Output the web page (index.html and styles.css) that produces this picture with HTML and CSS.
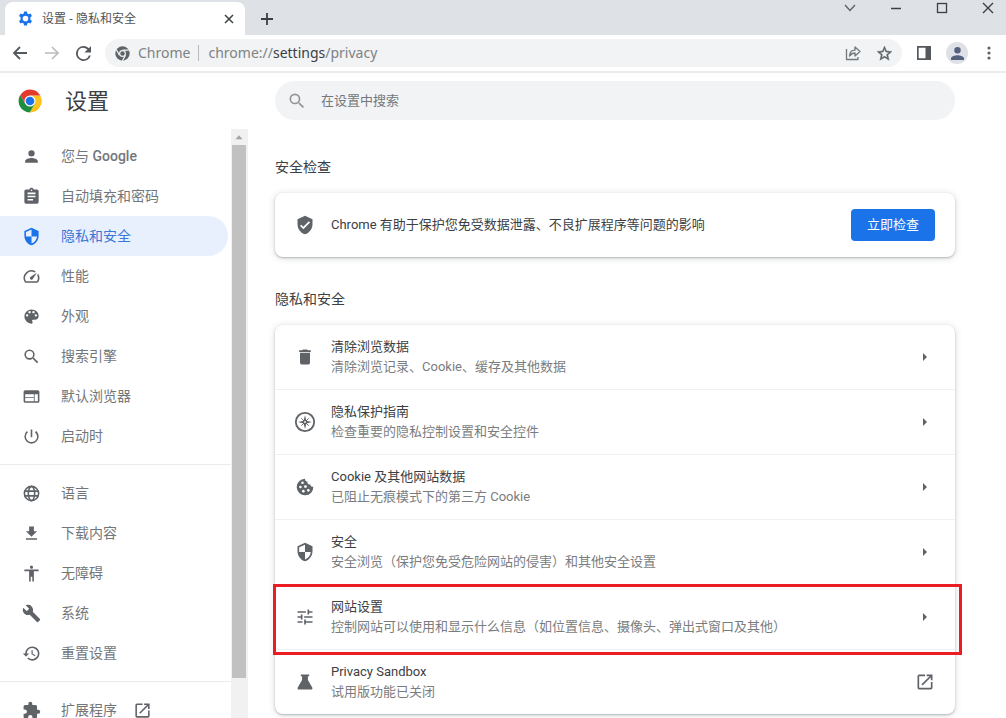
FILE: index.html
```html
<!DOCTYPE html>
<html lang="zh-CN">
<head>
<meta charset="utf-8">
<title>设置 - 隐私和安全</title>
<link rel="stylesheet" href="styles.css">
</head>
<body>
<header class="tabstrip">
  <div class="tab">
    <svg class="tab-icon" viewBox="0 0 24 24" width="17" height="17"><path fill="#1a73e8" fill-rule="evenodd" d="M10 2h4l.6 2.900 1.700 1 2.800-1 2 3.500-2.200 1.900v3.400l2.200 1.900-2 3.500-2.800-1-1.700 1L14 22h-4l-.6-2.900-1.700-1-2.800 1-2-3.500 2.200-1.900v-3.400L2.900 8.400l2-3.500 2.800 1 1.700-1zM12 8a4 4 0 1 0 0 8 4 4 0 0 0 0-8z"/></svg>
    <span class="tab-title">设置 - 隐私和安全</span>
    <button class="icon-btn" aria-label="关闭标签页"><svg viewBox="0 0 10 10" width="10" height="10"><path d="M1 1l8 8M9 1L1 9" stroke="#3c4043" stroke-width="1.500"/></svg></button>
  </div>
  <button class="icon-btn new-tab" aria-label="新标签页"><svg viewBox="0 0 12 12" width="12" height="12"><path d="M6 0v12M0 6h12" stroke="#3c4043" stroke-width="1.800"/></svg></button>
  <div class="window-controls">
    <button class="icon-btn" aria-label="搜索标签页"><svg viewBox="0 0 12 12" width="12" height="12"><path d="M1 3l5 5.500L11 3" fill="none" stroke="#5f6368" stroke-width="1.400"/></svg></button>
    <button class="icon-btn" aria-label="最小化"><svg viewBox="0 0 12 12" width="12" height="12"><path d="M1 6.500h10" stroke="#3c4043" stroke-width="1.500"/></svg></button>
    <button class="icon-btn" aria-label="最大化"><svg viewBox="0 0 12 12" width="12" height="12"><rect x="1.500" y="1.500" width="9" height="9" fill="none" stroke="#3c4043" stroke-width="1.300"/></svg></button>
    <button class="icon-btn" aria-label="关闭"><svg viewBox="0 0 12 12" width="12" height="12"><path d="M1 1l10 10M11 1L1 11" stroke="#3c4043" stroke-width="1.400"/></svg></button>
  </div>
</header>
<div class="toolbar">
  <div class="nav-buttons">
    <button class="icon-btn" aria-label="后退"><svg viewBox="0 0 16 16" width="16" height="16"><path d="M15 8H2M8 2L2 8l6 6" fill="none" stroke="#55595e" stroke-width="1.800"/></svg></button>
    <button class="icon-btn" aria-label="前进"><svg viewBox="0 0 16 16" width="16" height="16"><path d="M1 8h13M8 2l6 6-6 6" fill="none" stroke="#babcbe" stroke-width="1.700"/></svg></button>
    <button class="icon-btn" aria-label="重新加载"><svg viewBox="4 4 16 16" width="15" height="15"><path fill="#55595e" d="M17.650 6.350A7.960 7.960 0 0 0 12 4a8 8 0 1 0 7.730 10h-2.080A6 6 0 1 1 12 6c1.660 0 3.140.69 4.220 1.780L13 11h7V4l-2.350 2.350z"/></svg></button>
  </div>
  <div class="omnibox">
    <svg viewBox="0 0 24 24" width="15" height="15"><circle cx="12" cy="12" r="11.500" fill="#5f6368"/><path d="M12 6.500h10M7.200 14.700L2.200 6M16.800 14.700L11.800 23.500" stroke="#f1f3f4" stroke-width="2"/><circle cx="12" cy="12" r="5.500" fill="#f1f3f4"/><circle cx="12" cy="12" r="3.600" fill="#5f6368"/></svg>
    <span class="site-name">Chrome</span>
    <div class="url" role="textbox" aria-label="地址栏" tabindex="0">chrome://<span class="url-host">settings</span>/privacy</div>
    <button class="icon-btn" aria-label="分享"><svg viewBox="0 0 16 16" width="16" height="16"><path d="M1.500 4v10.500h11.500V12M4.500 11c.3-4 2.500-5.800 5.500-5.800V2l5 4.500-5 4.500V8C7.500 8 6 9 4.500 11z" fill="none" stroke="#74787c" stroke-width="1.300" stroke-linejoin="round"/></svg></button>
    <button class="icon-btn" aria-label="收藏"><svg viewBox="2 2 20 20" width="15" height="15"><path fill="#5f6368" stroke="#5f6368" stroke-width=".5" d="M22 9.240l-7.190-.62L12 2 9.190 8.630 2 9.240l5.460 4.730L5.820 21 12 17.270 18.180 21l-1.630-7.030L22 9.240zM12 15.400l-3.760 2.270 1-4.280-3.320-2.880 4.380-.38L12 6.100l1.710 4.040 4.380.38-3.320 2.880 1 4.280L12 15.400z"/></svg></button>
  </div>
  <div class="toolbar-actions">
    <button class="icon-btn" aria-label="侧边栏"><svg viewBox="0 0 14 14" width="14" height="14"><path fill="#55595e" fill-rule="evenodd" d="M0 0h14v14H0zM1.700 1.700v10.600h6.800V1.700z"/></svg></button>
    <button class="icon-btn avatar" aria-label="用户"><svg viewBox="4 4 16 16" width="13" height="13"><path fill="#566180" d="M12 12a4 4 0 1 0 0-8 4 4 0 0 0 0 8zm0 2c-2.670 0-8 1.340-8 4v2h16v-2c0-2.660-5.330-4-8-4z"/></svg></button>
    <button class="icon-btn more" aria-label="更多"><svg viewBox="0 0 4 14" width="4" height="14"><g fill="#5f6368"><circle cx="2" cy="2" r="1.600"/><circle cx="2" cy="7" r="1.600"/><circle cx="2" cy="12" r="1.600"/></g></svg></button>
  </div>
</div>
<div class="page">
  <aside class="sidebar">
    <div class="brand">
      <svg viewBox="0 0 48 48" width="24" height="24"><path fill="#fcc31e" d="M24 13h20.500A23 23 0 0 1 23.500 47L33.500 29z"/><path fill="#1e8e3e" d="M4.500 12A23 23 0 0 0 23.500 47L33.600 29.500 14.500 29.500z"/><path fill="#e33b2e" d="M4.500 12.500a23 23 0 0 1 40 .5H24L14.500 29.500z"/><circle cx="24" cy="24" r="11" fill="#fff"/><circle cx="24" cy="24" r="8.700" fill="#1a73e8"/></svg>
      <h1>设置</h1>
    </div>
    <div class="menu-area">
      <nav class="menu">
        <a class="menu-item" href="#people"><svg viewBox="0 0 24 24"><path d="M12 12a4 4 0 1 0 0-8 4 4 0 0 0 0 8zm0 2c-2.670 0-8 1.340-8 4v2h16v-2c0-2.660-5.330-4-8-4z"/></svg><span>您与 <span class="medium">Google</span></span></a>
        <a class="menu-item" href="#autofill"><svg viewBox="0 0 24 24"><path d="M19 3h-4.180C14.400 1.840 13.300 1 12 1s-2.400.84-2.820 2H5a2 2 0 0 0-2 2v14a2 2 0 0 0 2 2h14a2 2 0 0 0 2-2V5a2 2 0 0 0-2-2zm-7 0a1 1 0 1 1 0 2 1 1 0 0 1 0-2zm2 14H7v-2h7v2zm3-4H7v-2h10v2zm0-4H7V7h10v2z"/></svg><span>自动填充和密码</span></a>
        <a class="menu-item active" href="#privacy" aria-current="page"><svg viewBox="0 0 24 24"><path d="M12 1L3 5v6c0 5.550 3.840 10.740 9 12 5.160-1.260 9-6.450 9-12V5l-9-4zm0 10.990h7c-.53 4.120-3.280 7.790-7 8.940V12H5V6.300l7-3.110v8.800z"/></svg><span>隐私和安全</span></a>
        <a class="menu-item" href="#performance"><svg viewBox="0 0 24 24"><path d="M20.380 8.570l-1.230 1.850a8 8 0 0 1-.22 7.580H5.070A8 8 0 0 1 15.580 6.850l1.850-1.230A10 10 0 0 0 3.350 19a2 2 0 0 0 1.720 1h13.850a2 2 0 0 0 1.740-1 10 10 0 0 0-.27-10.440zM10.590 15.410a2 2 0 0 0 2.830 0l5.660-8.490-8.490 5.660a2 2 0 0 0 0 2.830z"/></svg><span>性能</span></a>
        <a class="menu-item" href="#appearance"><svg viewBox="0 0 24 24"><path d="M12 3a9 9 0 0 0 0 18c.83 0 1.500-.67 1.500-1.500 0-.39-.15-.74-.39-1.010-.23-.26-.38-.61-.38-.99 0-.83.67-1.500 1.500-1.500H16a5 5 0 0 0 5-5c0-4.420-4.030-8-9-8zm-5.500 9a1.500 1.500 0 1 1 0-3 1.500 1.500 0 0 1 0 3zm3-4a1.500 1.500 0 1 1 0-3 1.500 1.500 0 0 1 0 3zm5 0a1.500 1.500 0 1 1 0-3 1.500 1.500 0 0 1 0 3zm3 4a1.500 1.500 0 1 1 0-3 1.500 1.500 0 0 1 0 3z"/></svg><span>外观</span></a>
        <a class="menu-item" href="#search"><svg viewBox="0 0 24 24"><path d="M15.500 14h-.79l-.28-.27A6.470 6.470 0 0 0 16 9.500 6.500 6.500 0 1 0 9.500 16c1.610 0 3.090-.59 4.230-1.570l.27.28v.79l5 4.990L20.490 19l-4.990-5zm-6 0a4.500 4.500 0 1 1 0-9 4.500 4.500 0 0 1 0 9z"/></svg><span>搜索引擎</span></a>
        <a class="menu-item" href="#browser"><svg viewBox="0 0 24 24"><path fill-rule="evenodd" d="M20 4H4a2 2 0 0 0-2 2v12a2 2 0 0 0 2 2h16a2 2 0 0 0 2-2V6a2 2 0 0 0-2-2zm-5 14H4v-4h11v4zm0-5H4V9h11v4zm5 5h-4V9h4v9z"/></svg><span>默认浏览器</span></a>
        <a class="menu-item" href="#startup"><svg viewBox="0 0 24 24"><path d="M13 3h-2v10h2V3zm4.830 2.170l-1.420 1.420A6.920 6.920 0 0 1 19 12a7 7 0 1 1-11.420-5.420L6.170 5.170A8.930 8.930 0 0 0 3 12a9 9 0 1 0 18 0c0-2.740-1.230-5.180-3.170-6.830z"/></svg><span>启动时</span></a>
        <hr>
        <a class="menu-item" href="#languages"><svg viewBox="0 0 24 24"><g fill="none" stroke="#5f6368" stroke-width="2"><circle cx="12" cy="12" r="9"/><ellipse cx="12" cy="12" rx="4" ry="9"/><path d="M3.500 9h17M3.500 15h17"/></g></svg><span>语言</span></a>
        <a class="menu-item" href="#downloads"><svg viewBox="0 0 24 24"><path d="M19 9h-4V3H9v6H5l7 7 7-7zM5 18v2h14v-2H5z"/></svg><span>下载内容</span></a>
        <a class="menu-item" href="#accessibility"><svg viewBox="0 0 24 24"><path d="M12 2a2 2 0 1 1 0 4 2 2 0 0 1 0-4zm9 7h-6v13h-2v-6h-2v6H9V9H3V7h18v2z"/></svg><span>无障碍</span></a>
        <a class="menu-item" href="#system"><svg viewBox="0 0 24 24"><path d="M22.700 19l-9.100-9.100c.9-2.300.4-5-1.500-6.900-2-2-5-2.400-7.400-1.300L9 6 6 9 1.600 4.700C.4 7.100.9 10.100 2.900 12.100c1.900 1.900 4.600 2.400 6.900 1.500l9.100 9.100c.4.4 1 .4 1.400 0l2.300-2.300c.5-.4.5-1.100.1-1.400z"/></svg><span>系统</span></a>
        <a class="menu-item" href="#reset"><svg viewBox="0 0 24 24"><path d="M13 3a9 9 0 0 0-9 9H1l3.890 3.890.07.14L9 12H6a7 7 0 1 1 2.060 4.940l-1.420 1.420A9 9 0 1 0 13 3zm-1 5v5l4.280 2.540.72-1.210-3.500-2.080V8H12z"/></svg><span>重置设置</span></a>
        <hr>
        <a class="menu-item" href="#extensions"><svg viewBox="0 0 24 24"><path d="M20.500 11H19V7a2 2 0 0 0-2-2h-4V3.500a2.500 2.500 0 0 0-5 0V5H4a2 2 0 0 0-1.990 2v3.800H3.500a2.700 2.700 0 0 1 0 5.400H2V20a2 2 0 0 0 2 2h3.800v-1.500a2.700 2.700 0 0 1 5.400 0V22H17a2 2 0 0 0 2-2v-4h1.500a2.500 2.500 0 0 0 0-5z"/></svg><span>扩展程序</span><svg class="external" viewBox="0 0 24 24"><path d="M19 19H5V5h7V3H5a2 2 0 0 0-2 2v14a2 2 0 0 0 2 2h14a2 2 0 0 0 2-2v-7h-2v7zM14 3v2h3.590l-9.830 9.830 1.410 1.410L19 6.410V10h2V3h-7z"/></svg></a>
      </nav>
      <div class="scrollbar" aria-hidden="true">
        <svg class="scroll-up" viewBox="0 0 16 16"><path d="M4 10.500h8L8 6z" fill="#a3a3a3"/></svg>
        <div class="scroll-track"><div class="scroll-thumb"></div></div>
      </div>
    </div>
  </aside>
  <main class="content">
    <label class="search">
      <svg viewBox="0 0 24 24"><path d="M15.500 14h-.79l-.28-.27A6.470 6.470 0 0 0 16 9.500 6.500 6.500 0 1 0 9.500 16c1.610 0 3.090-.59 4.230-1.570l.27.28v.79l5 4.990L20.490 19l-4.990-5zm-6 0a4.500 4.500 0 1 1 0-9 4.500 4.500 0 0 1 0 9z"/></svg>
      <input type="search" placeholder="在设置中搜索" aria-label="在设置中搜索">
    </label>
    <h2>安全检查</h2>
    <section class="card check">
      <svg class="row-icon" viewBox="0 0 24 24"><path d="M12 1L3 5v6c0 5.550 3.840 10.740 9 12 5.160-1.260 9-6.450 9-12V5l-9-4zm-2 16l-4-4 1.410-1.410L10 14.170l6.590-6.590L18 9l-8 8z"/></svg>
      <p>Chrome 有助于保护您免受数据泄露、不良扩展程序等问题的影响</p>
      <button class="primary">立即检查</button>
    </section>
    <h2>隐私和安全</h2>
    <section class="card">
      <a class="row" href="#clear"><svg class="row-icon" viewBox="0 0 24 24"><path d="M6 19a2 2 0 0 0 2 2h8a2 2 0 0 0 2-2V7H6v12zM19 4h-3.500l-1-1h-5l-1 1H5v2h14V4z"/></svg><span class="row-text"><span class="row-title">清除浏览数据</span><span class="row-sub">清除浏览记录、Cookie、缓存及其他数据</span></span><svg class="arrow" viewBox="0 0 18 18"><path d="M7 5l4 4-4 4z"/></svg></a>
      <a class="row" href="#guide"><svg class="row-icon large" viewBox="0 0 24 24"><circle cx="12" cy="12" r="10" fill="none" stroke="#5f6368" stroke-width="2"/><path d="M12 4.500l1.500 6 6 1.500-6 1.500-1.500 6-1.500-6-6-1.500 6-1.500z"/><path d="M8 8l8 8M16 8l-8 8" stroke="#5f6368" stroke-width="1"/><circle cx="12" cy="12" r="1" fill="#fff"/></svg><span class="row-text"><span class="row-title">隐私保护指南</span><span class="row-sub">检查重要的隐私控制设置和安全控件</span></span><svg class="arrow" viewBox="0 0 18 18"><path d="M7 5l4 4-4 4z"/></svg></a>
      <a class="row" href="#cookies"><svg class="row-icon" viewBox="0 0 24 24"><path d="M12 2a10 10 0 1 0 10 9.500c-2 .7-3.500-.5-3.500-2.500-2.500.5-4-1-3.500-3.500-2 0-3-1.500-3-3.500z"/><g fill="#fff"><circle cx="9" cy="7" r="1.500"/><circle cx="6.500" cy="12" r="1.500"/><circle cx="12.500" cy="11.500" r="1.700"/><circle cx="10" cy="17" r="1.600"/><circle cx="16" cy="16" r="1.600"/></g></svg><span class="row-text"><span class="row-title">Cookie 及其他网站数据</span><span class="row-sub">已阻止无痕模式下的第三方 Cookie</span></span><svg class="arrow" viewBox="0 0 18 18"><path d="M7 5l4 4-4 4z"/></svg></a>
      <a class="row" href="#security"><svg class="row-icon" viewBox="0 0 24 24"><path d="M12 1L3 5v6c0 5.550 3.840 10.740 9 12 5.160-1.260 9-6.450 9-12V5l-9-4zm0 10.990h7c-.53 4.120-3.280 7.790-7 8.940V12H5V6.300l7-3.110v8.800z"/></svg><span class="row-text"><span class="row-title">安全</span><span class="row-sub">安全浏览（保护您免受危险网站的侵害）和其他安全设置</span></span><svg class="arrow" viewBox="0 0 18 18"><path d="M7 5l4 4-4 4z"/></svg></a>
      <a class="row highlighted" href="#site"><svg class="row-icon" viewBox="0 0 24 24"><path d="M3 17v2h6v-2H3zM3 5v2h10V5H3zm10 16v-2h8v-2h-8v-2h-2v6h2zM7 9v2H3v2h4v2h2V9H7zm14 4v-2H11v2h10zm-6-4h2V7h4V5h-4V3h-2v6z"/></svg><span class="row-text"><span class="row-title">网站设置</span><span class="row-sub">控制网站可以使用和显示什么信息（如位置信息、摄像头、弹出式窗口及其他）</span></span><svg class="arrow" viewBox="0 0 18 18"><path d="M7 5l4 4-4 4z"/></svg></a>
      <a class="row" href="#sandbox"><svg class="row-icon" viewBox="0 0 24 24"><path d="M7 3h10v2h-1.500v4.500l5.200 9c.6 1.200 0 2.500-1.300 2.500H4.600c-1.300 0-1.900-1.300-1.300-2.500l5.200-9V5H7z"/></svg><span class="row-text"><span class="row-title">Privacy Sandbox</span><span class="row-sub">试用版功能已关闭</span></span><svg class="row-icon end" viewBox="0 0 24 24"><path d="M19 19H5V5h7V3H5a2 2 0 0 0-2 2v14a2 2 0 0 0 2 2h14a2 2 0 0 0 2-2v-7h-2v7zM14 3v2h3.590l-9.830 9.830 1.410 1.410L19 6.410V10h2V3h-7z"/></svg></a>
    </section>
  </main>
</div>
</body>
</html>
```
FILE: styles.css
```css
* { box-sizing: border-box; }

body {
  margin: 0;
  height: 100vh;
  display: flex;
  flex-direction: column;
  overflow: hidden;
  background: #fff;
  color: #3c4043;
  font: 13px/20px Roboto, "Noto Sans CJK SC", sans-serif;
}

svg { display: block; flex: none; }
a { color: inherit; text-decoration: none; }

.icon-btn {
  display: flex;
  align-items: center;
  justify-content: center;
  flex: none;
  padding: 0;
  border: 0;
  background: none;
}

/* Tab strip */
.tabstrip {
  display: flex;
  flex: none;
  height: 35px;
  padding-left: 5px;
  background: #dee1e6;
}
.tab {
  display: flex;
  align-items: center;
  width: 240px;
  margin-top: 2px;
  padding: 0 11px 0 12px;
  border-radius: 8px 8px 0 0;
  background: #fff;
}
.tab-title {
  flex: 1;
  margin-left: 8px;
  color: #505357;
  font-family: "Noto Sans", "Noto Sans CJK SC", sans-serif;
  font-size: 12px;
}
.new-tab { margin: 2px 0 0 16px; }
.window-controls {
  display: flex;
  gap: 34px;
  height: 16px;
  margin-left: auto;
  padding-right: 12px;
}

/* Toolbar */
.toolbar {
  display: flex;
  align-items: center;
  flex: none;
  height: 38px;
  padding: 0 15px 0 12px;
  border-bottom: 2px solid #ebebec;
}
.nav-buttons { display: flex; gap: 16px; }
.omnibox {
  display: flex;
  align-items: center;
  flex: 1;
  height: 28px;
  margin-left: 14px;
  padding: 0 10px;
  border-radius: 14px;
  background: #f1f3f4;
  color: #7f8286;
  font: 14px/20px "Noto Sans", sans-serif;
}
.site-name {
  margin-left: 8px;
  padding-right: 8px;
  border-right: 1px solid #b9bbbe;
  line-height: 16px;
}
.url { flex: 1; margin-left: 9px; }
.url-host { color: #3c4043; }
.omnibox .icon-btn + .icon-btn { margin-left: 16px; }
.toolbar-actions {
  display: flex;
  align-items: center;
  gap: 15px;
  margin-left: 15px;
}
.more { margin-left: 4px; }
.avatar {
  width: 22px;
  height: 22px;
  border-radius: 50%;
  background: #dee1e6;
}

/* Settings page */
.page { display: flex; flex: 1; min-height: 0; }
.sidebar {
  display: flex;
  flex-direction: column;
  flex: none;
  width: 248px;
}
.brand {
  display: flex;
  align-items: center;
  gap: 23px;
  flex: none;
  height: 56px;
  padding-left: 18px;
}
.brand h1 {
  margin: 0;
  padding-top: 2px;
  font-size: 22px;
  font-weight: 400;
  line-height: 28px;
}
.menu-area { display: flex; flex: 1; min-height: 0; }
.menu {
  flex: 1;
  overflow: hidden;
  padding-top: 7px;
}
.menu-item {
  display: flex;
  align-items: center;
  height: 40px;
  margin-right: 3px;
  padding-left: 22px;
  border-radius: 0 20px 20px 0;
  color: #737679;
  font-size: 14px;
}
.menu-item svg {
  width: 19px;
  height: 19px;
  margin-right: 20px;
  fill: #5f6368;
}
.menu-item .external { margin-left: 16px; }
.medium { font-weight: 500; }
.active { background: #e8f0fe; color: #3a76d8; }
.menu-item.active svg { fill: #1a73e8; }
.menu hr {
  height: 1px;
  margin: 8px 0;
  border: 0;
  background: #ebebec;
}
.scrollbar {
  display: flex;
  flex-direction: column;
  width: 17px;
  padding: 0 2px 0 1px;
  background: #f1f1f1;
}
.scroll-up { width: 14px; height: 16px; }
.scroll-track { flex: 1; }
.scroll-thumb { height: 93%; background: #c1c1c1; }

.content {
  flex: 1;
  min-width: 0;
  padding: 8px 51px 0 27px;
}
.search {
  display: flex;
  align-items: center;
  height: 39px;
  padding: 0 12px;
  border-radius: 20px;
  background: #f1f3f4;
}
.search svg { width: 20px; height: 20px; fill: #939699; }
.search input {
  flex: 1;
  min-width: 0;
  margin-left: 14px;
  padding: 0;
  border: 0;
  outline: 0;
  background: none;
  font: inherit;
}
.search input::placeholder { color: #75787c; opacity: 1; }
h2 {
  margin: 37px 0 16px;
  font-size: 14px;
  font-weight: 400;
  line-height: 20px;
}
.card {
  border-radius: 8px;
  background: #fff;
  box-shadow: 0 1px 2px rgba(60, 64, 67, .3), 0 1px 6px 1px rgba(60, 64, 67, .15);
}
.card + h2 { margin-top: 32px; }
.check {
  display: flex;
  align-items: center;
  height: 64px;
  padding: 0 20px;
}
.check p { flex: 1; margin: 0; }
.row-icon {
  width: 20px;
  height: 20px;
  margin-right: 16px;
  fill: #5f6368;
}
.primary {
  height: 32px;
  padding: 0 16px;
  border: 0;
  border-radius: 4px;
  background: #1a73e8;
  color: #fff;
  font: inherit;
}
.row {
  position: relative;
  display: flex;
  align-items: center;
  height: 65px;
  padding: 0 20px;
  border-bottom: 1px solid #f1f1f2;
}
.row:last-child { height: 64px; border-bottom: 0; }
.row-text { flex: 1; }
.row-title, .row-sub { display: block; }
.row-sub { color: #7a7d80; }
.large { width: 22px; height: 22px; margin: 0 15px 0 -1px; }
.arrow { width: 18px; height: 18px; margin-right: 1px; fill: #5f6368; }
.end { margin-right: 0; }

/* Callout frame drawn over the card edges */
.highlighted::after {
  content: "";
  position: absolute;
  z-index: 1;
  inset: -1px -7px -6px -2px;
  border: 3px solid #ec1c24;
}
```
